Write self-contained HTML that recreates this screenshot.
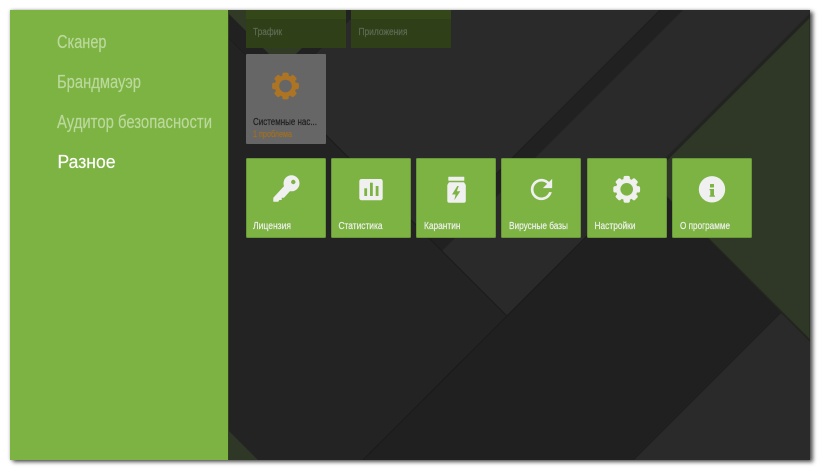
<!DOCTYPE html>
<html lang="ru">
<head>
<meta charset="utf-8">
<title>Разное</title>
<style>
html,body{margin:0;padding:0;background:#fff;width:821px;height:471px;overflow:hidden}
#win{position:absolute;left:10px;top:10px;width:800px;height:450px;box-shadow:3px 2px 4px rgba(0,0,0,.65),0 0 3px rgba(0,0,0,.25)}
svg{position:absolute;left:0;top:0}
text{font-family:"Liberation Sans",Arial,sans-serif;stroke-width:.18px;stroke:currentColor}
</style>
</head>
<body>
<div id="win"></div>
<svg width="821" height="471" viewBox="0 0 821 471" xmlns="http://www.w3.org/2000/svg">
<defs>
<clipPath id="c"><rect x="10" y="10" width="800" height="450"/></clipPath>
<g id="gear">
<circle r="10.800"/>
<rect x="-3.200" y="-13.400" width="6.400" height="26.800" rx="1.800"/>
<rect x="-3.200" y="-13.400" width="6.400" height="26.800" rx="1.800" transform="rotate(45)"/>
<rect x="-3.200" y="-13.400" width="6.400" height="26.800" rx="1.800" transform="rotate(90)"/>
<rect x="-3.200" y="-13.400" width="6.400" height="26.800" rx="1.800" transform="rotate(135)"/>
</g>
</defs>
<g clip-path="url(#c)">
<rect x="10" y="10" width="800" height="450" fill="#232323"/>
<polygon points="201,10 813,10 507,316" fill="#2a2a2a"/>
<polygon points="660,10 683,10 442,251 430.5,239.5" fill="#212121"/>
<path d="M660 10L430.5 239.5" stroke="#1e1e1e" stroke-width="1"/>
<path d="M201 10L507 316" stroke="#1c1c1c" stroke-width="1"/>
<polygon points="201,10 225,10 282.5,67.5 340,10 360,10 280.5,89.5" fill="#212121"/>
<polygon points="225,10 340,10 282.5,67.5" fill="#303a25"/>
<polygon points="507,316 363,460 634,460 781,313 648.5,178.5" fill="#202020"/>
<path d="M363 460L587 236" stroke="#1b1b1b" stroke-width="1.200"/>
<path d="M634 460L781 313" stroke="#1b1b1b" stroke-width="1"/>
<polygon points="781,313 810,342 810,460 634,460" fill="#2a2a2a"/>
<polygon points="648.5,178.5 810,17 810,340" fill="#2f3726" stroke="#22261d" stroke-width="1"/>
<polygon points="229,431 258,460 229,460" fill="#2f3726"/>

<rect x="10" y="10" width="218" height="450" fill="#7cb342"/>
<rect x="228" y="10" width="1" height="450" fill="#33401f"/>
</g>

<text x="57" y="48" font-size="18" fill="#bcd99d" color="#bcd99d" textLength="49.500" lengthAdjust="spacingAndGlyphs">Сканер</text>
<text x="57" y="88" font-size="18" fill="#bcd99d" color="#bcd99d" textLength="84" lengthAdjust="spacingAndGlyphs">Брандмауэр</text>
<text x="57" y="128" font-size="18" fill="#bcd99d" color="#bcd99d" textLength="155" lengthAdjust="spacingAndGlyphs">Аудитор безопасности</text>
<text x="57.500" y="168" font-size="18" fill="#ffffff" color="#ffffff" textLength="58" lengthAdjust="spacingAndGlyphs">Разное</text>

<!-- dim top tiles -->
<rect x="246" y="10" width="100" height="38" fill="#2f4019"/>
<rect x="246" y="10" width="100" height="9" fill="#334719"/>
<rect x="351" y="10" width="100" height="38" fill="#2f4019"/>
<rect x="351" y="10" width="100" height="9" fill="#334719"/>
<text x="253" y="35" font-size="10" fill="#5f6c56" color="#5f6c56" textLength="29" lengthAdjust="spacingAndGlyphs">Трафик</text>
<text x="358.500" y="35" font-size="10" fill="#5f6c56" color="#5f6c56" textLength="49" lengthAdjust="spacingAndGlyphs">Приложения</text>

<!-- system tile -->
<rect x="246" y="54" width="80" height="90" rx="1" fill="#666666"/>
<use href="#gear" transform="translate(285.500 86)" fill="#ad7423"/>
<circle cx="285.500" cy="86" r="6.300" fill="#666666"/>
<text x="253" y="125" font-size="10" fill="#1e1e1e" color="#1e1e1e" textLength="64" lengthAdjust="spacingAndGlyphs">Системные нас...</text>
<text x="253" y="137" font-size="9" fill="#a3701f" color="#a3701f" textLength="39" lengthAdjust="spacingAndGlyphs">1 проблема</text>

<!-- tiles -->
<g fill="#7cb342" stroke="#69983a" stroke-width="1">
<rect x="246.500" y="158.500" width="79" height="79" rx="1"/>
<rect x="331.500" y="158.500" width="79" height="79" rx="1"/>
<rect x="416.500" y="158.500" width="79" height="79" rx="1"/>
<rect x="501.500" y="158.500" width="79" height="79" rx="1"/>
<rect x="587.500" y="158.500" width="79" height="79" rx="1"/>
<rect x="672.500" y="158.500" width="79" height="79" rx="1"/>
</g>

<g fill="#f0f0f0" color="#f0f0f0" font-size="10">
<text x="253" y="229" textLength="38" lengthAdjust="spacingAndGlyphs">Лицензия</text>
<text x="338.500" y="229" textLength="44" lengthAdjust="spacingAndGlyphs">Статистика</text>
<text x="424" y="229" textLength="36.500" lengthAdjust="spacingAndGlyphs">Карантин</text>
<text x="509" y="229" textLength="59" lengthAdjust="spacingAndGlyphs">Вирусные базы</text>
<text x="594.500" y="229" textLength="41" lengthAdjust="spacingAndGlyphs">Настройки</text>
<text x="680" y="229" textLength="50" lengthAdjust="spacingAndGlyphs">О программе</text>
</g>

<!-- key -->
<g fill="#f0f0f0">
<circle cx="291.500" cy="183.300" r="8"/>
<polygon points="286,184 273.300,197.700 273.300,201.700 278.300,201.700 279.300,200 281.700,200 281.700,197.700 284,197.700 291,190"/>
</g>
<circle cx="293.300" cy="182" r="2.200" fill="#7cb342"/>

<!-- stats -->
<rect x="359.300" y="179" width="23.400" height="21.300" rx="2.200" fill="#f0f0f0"/>
<g fill="#7cb342">
<rect x="364.300" y="188.300" width="2.800" height="7.700"/>
<rect x="370" y="182.700" width="2.800" height="13.300"/>
<rect x="375.700" y="186" width="2.800" height="10"/>
</g>

<!-- jar -->
<rect x="448.300" y="176.700" width="16" height="4" rx=".6" fill="#f0f0f0"/>
<path d="M449 182.300H464L465.800 185V200.700a2 2 0 0 1-2 2H449.300a2 2 0 0 1-2-2V185Z" fill="#f0f0f0"/>
<polygon points="457.300,186 452,194.500 455.600,194.500 454.300,200.300 460.300,191.300 456.800,191.300 458.800,186" fill="#7cb342"/>

<!-- refresh -->
<path transform="translate(525.500 173.500) scale(1.333)" fill="#f0f0f0" d="M17.650 6.350C16.200 4.900 14.210 4 12 4c-4.420 0-7.990 3.580-7.990 8s3.570 8 7.990 8c3.730 0 6.840-2.550 7.730-6h-2.080c-.82 2.330-3.040 4-5.650 4-3.310 0-6-2.690-6-6s2.690-6 6-6c1.660 0 3.140.69 4.220 1.780L13 11h7V4l-2.350 2.350z"/>

<!-- gear -->
<use href="#gear" transform="translate(626.700 189.300)" fill="#f0f0f0"/>
<circle cx="626.700" cy="189.300" r="6.300" fill="#7cb342"/>

<!-- info -->
<circle cx="712" cy="189.300" r="13.200" fill="#f0f0f0"/>
<rect x="710" y="184" width="4" height="3.500" rx=".5" fill="#7cb342"/>
<path d="M709.500 189H714V195.500H715V196.700H709.500V195.500H710.300V190.200H709.500Z" fill="#7cb342"/>
</svg>
</body>
</html>
